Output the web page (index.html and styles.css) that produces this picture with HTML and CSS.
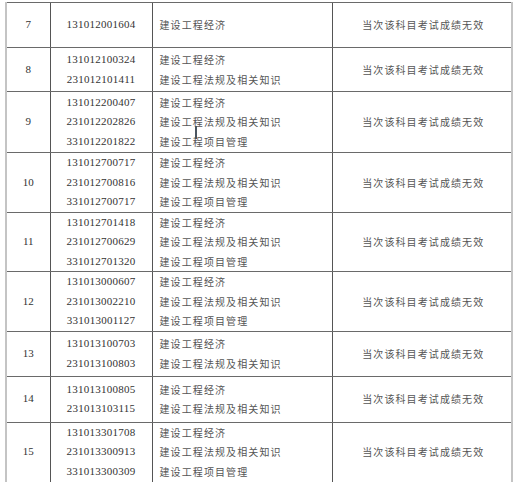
FILE: index.html
```html
<!DOCTYPE html>
<html lang="zh">
<head>
<meta charset="utf-8">
<link rel="stylesheet" href="styles.css">
</head>
<body>
<table class="grid">
  <colgroup>
    <col class="c-no"><col class="c-id"><col class="c-subj"><col class="c-res">
  </colgroup>
  <tbody>
    <tr style="height:45px">
      <td class="no">7</td>
      <td class="id"><div>131012001604</div></td>
      <td class="subj"><div>建设工程经济</div></td>
      <td class="res">当次该科目考试成绩无效</td>
    </tr>
    <tr style="height:44px">
      <td class="no">8</td>
      <td class="id"><div>131012100324</div><div>231012101411</div></td>
      <td class="subj"><div>建设工程经济</div><div>建设工程法规及相关知识</div></td>
      <td class="res">当次该科目考试成绩无效</td>
    </tr>
    <tr style="height:61px">
      <td class="no">9</td>
      <td class="id"><div>131012200407</div><div>231012202826</div><div>331012201822</div></td>
      <td class="subj"><div>建设工程经济</div><div>建设工<span class="cursor">程</span>法规及相关知识</div><div>建设工程项目管理</div></td>
      <td class="res">当次该科目考试成绩无效</td>
    </tr>
    <tr style="height:59px">
      <td class="no">10</td>
      <td class="id"><div>131012700717</div><div>231012700816</div><div>331012700717</div></td>
      <td class="subj"><div>建设工程经济</div><div>建设工程法规及相关知识</div><div>建设工程项目管理</div></td>
      <td class="res">当次该科目考试成绩无效</td>
    </tr>
    <tr style="height:59px">
      <td class="no">11</td>
      <td class="id"><div>131012701418</div><div>231012700629</div><div>331012701320</div></td>
      <td class="subj"><div>建设工程经济</div><div>建设工程法规及相关知识</div><div>建设工程项目管理</div></td>
      <td class="res">当次该科目考试成绩无效</td>
    </tr>
    <tr style="height:58px">
      <td class="no">12</td>
      <td class="id"><div>131013000607</div><div>231013002210</div><div>331013001127</div></td>
      <td class="subj"><div>建设工程经济</div><div>建设工程法规及相关知识</div><div>建设工程项目管理</div></td>
      <td class="res">当次该科目考试成绩无效</td>
    </tr>
    <tr style="height:45px">
      <td class="no">13</td>
      <td class="id"><div>131013100703</div><div>231013100803</div></td>
      <td class="subj"><div>建设工程经济</div><div>建设工程法规及相关知识</div></td>
      <td class="res">当次该科目考试成绩无效</td>
    </tr>
    <tr style="height:46px">
      <td class="no">14</td>
      <td class="id"><div>131013100805</div><div>231013103115</div></td>
      <td class="subj"><div>建设工程经济</div><div>建设工程法规及相关知识</div></td>
      <td class="res">当次该科目考试成绩无效</td>
    </tr>
    <tr style="height:60px">
      <td class="no">15</td>
      <td class="id"><div>131013301708</div><div>231013300913</div><div>331013300309</div></td>
      <td class="subj"><div>建设工程经济</div><div>建设工程法规及相关知识</div><div>建设工程项目管理</div></td>
      <td class="res">当次该科目考试成绩无效</td>
    </tr>
  </tbody>
</table>
</body>
</html>
```
FILE: styles.css
```css
html, body {
  margin: 0;
  padding: 0;
  background: #fff;
}
body {
  padding: 2px 0 0 5px;
  font-family: "Liberation Serif", "Noto Sans CJK SC", serif;
  color: #333;
}
.grid {
  border-collapse: collapse;
  table-layout: fixed;
  width: 506px;
  border-left: 2px solid #c4c4c4;
  border-right: 2px solid #c4c4c4;
}
.c-no { width: 44px; }
.c-id { width: 102px; }
.c-subj { width: 180px; }
.c-res { width: 180px; }
.grid td {
  border-top: 1px solid #6a6a6a;
  border-bottom: 1px solid #6a6a6a;
  border-left: 1px solid #555;
  padding: 0;
  vertical-align: middle;
  font-size: 11px;
  line-height: 19.5px;
}
.grid td:first-child { border-left: 2px solid #c4c4c4; }
.grid td:last-child { border-right: 2px solid #c4c4c4; }
.no {
  text-align: center;
  font-family: "Liberation Serif", serif;
}
.id {
  text-align: center;
  font-family: "Liberation Serif", serif;
  letter-spacing: 0.25px;
}
.subj {
  padding-left: 7px !important;
  font-family: "Noto Sans CJK SC", sans-serif;
  font-size: 10px !important;
  letter-spacing: 1.1px;
  color: #555;
}
.res {
  text-align: center;
  font-family: "Noto Sans CJK SC", sans-serif;
  font-size: 10px !important;
  letter-spacing: 1.1px;
  color: #555;
  padding-left: 3px !important;
}
.cursor {
  position: relative;
}
.cursor::after {
  content: "";
  position: absolute;
  left: 2px;
  top: 12px;
  width: 2px;
  height: 13px;
  background: #4a5560;
}
```
